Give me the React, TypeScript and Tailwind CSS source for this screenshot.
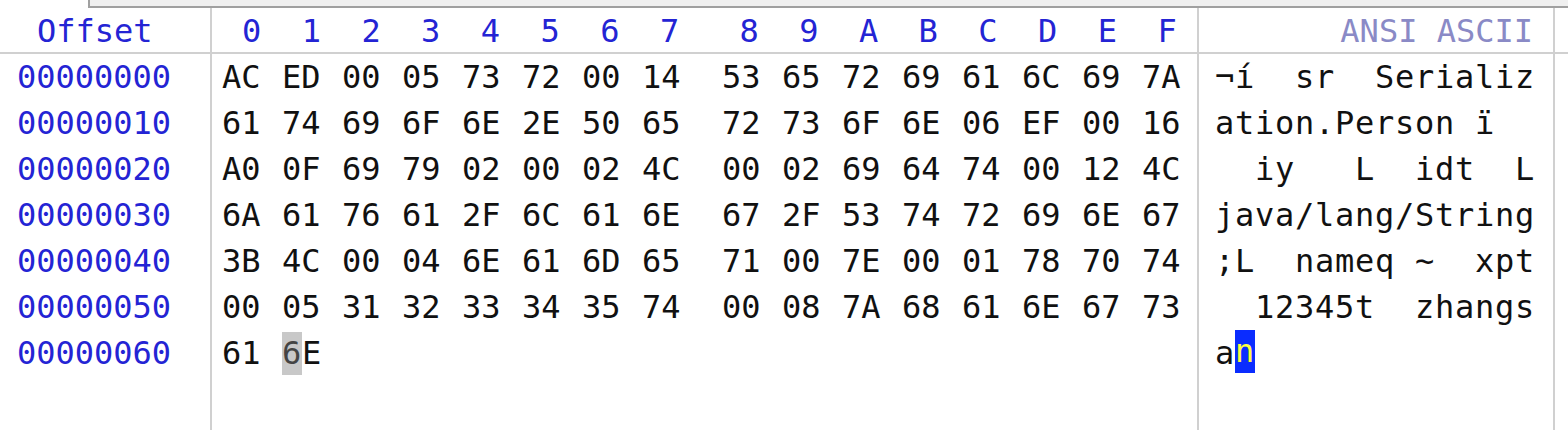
import React from 'react'

const hex = [
  'AC ED 00 05 73 72 00 14 53 65 72 69 61 6C 69 7A',
  '61 74 69 6F 6E 2E 50 65 72 73 6F 6E 06 EF 00 16',
  'A0 0F 69 79 02 00 02 4C 00 02 69 64 74 00 12 4C',
  '6A 61 76 61 2F 6C 61 6E 67 2F 53 74 72 69 6E 67',
  '3B 4C 00 04 6E 61 6D 65 71 00 7E 00 01 78 70 74',
  '00 05 31 32 33 34 35 74 00 08 7A 68 61 6E 67 73',
  '61 6E',
].map((r) => r.split(' '))

const cols = ['0', '1', '2', '3', '4', '5', '6', '7', '8', '9', 'A', 'B', 'C', 'D', 'E', 'F']

// cursor sits on the last byte, second nibble
const cursor = { row: 6, col: 1 }

function toChar(b: string) {
  const n = parseInt(b, 16)
  if (n < 0x20 || n === 0x7f || n === 0xa0 || (n >= 0x80 && n < 0xa0)) return ' '
  return new TextDecoder('windows-1252').decode(new Uint8Array([n]))
}

const mono = { fontFamily: '"DejaVu Sans Mono", "Liberation Mono", monospace' }

export default function App() {
  return (
    <div className="w-[1568px] h-[430px] bg-white overflow-hidden text-[32px] leading-[46px]" style={mono}>
      <div className="flex h-[8px]">
        <div className="w-[88px]" />
        <div className="flex-1 bg-[#f0f0f0] border-l-2 border-b-2 border-[#a0a0a0]" />
      </div>
      <div className="flex h-[422px]">
        {/* offset column */}
        <div className="w-[212px] border-r-2 border-[#d0d0d0] flex flex-col">
          <div className="h-[46px] border-b-2 border-[#d0d0d0] pl-[37px] leading-[46px] text-[#2424d4]">Offset</div>
          {hex.map((_, i) => (
            <div key={i} className="h-[46px] pl-[17px] text-[#2424d4]">
              {(i * 16).toString(16).toUpperCase().padStart(8, '0')}
            </div>
          ))}
        </div>

        {/* hex column */}
        <div className="w-[987px] border-r-2 border-[#d0d0d0] flex flex-col">
          <div className="h-[46px] border-b-2 border-[#d0d0d0] pl-[10px] flex leading-[46px] text-[#2424d4]">
            {cols.map((c, j) => (
              <span key={c} className={j === 7 ? 'w-[80px] pl-[20px]' : 'w-[60px] pl-[20px]'}>{c}</span>
            ))}
          </div>
          {hex.map((row, i) => (
            <div key={i} className="h-[46px] pl-[10px] flex text-[#111111] whitespace-pre">
              {row.map((b, j) => (
                <span key={j} className={j === 7 ? 'w-[80px] shrink-0' : 'w-[60px] shrink-0'}>
                  {i === cursor.row && j === cursor.col ? (
                    <>
                      <span className="inline-block w-[20px] bg-[#c8c8c8] text-[#444444] leading-[43px]">{b[0]}</span>
                      {b[1]}
                    </>
                  ) : (
                    b
                  )}
                </span>
              ))}
            </div>
          ))}
        </div>

        {/* ascii column */}
        <div className="w-[356px] border-r-2 border-[#d0d0d0] flex flex-col">
          <div className="h-[46px] border-b-2 border-[#d0d0d0] pr-[20px] text-right leading-[46px] text-[#8a8ac6]">ANSI ASCII</div>
          {hex.map((row, i) => (
            <div key={i} className="h-[46px] pl-[16px] flex text-[#111111] whitespace-pre">
              {row.map((b, j) => (
                <span
                  key={j}
                  className={
                    i === cursor.row && j === cursor.col
                      ? 'w-[20px] shrink-0 bg-[#0a2cff] text-[#ffff40] leading-[43px] h-[43px]'
                      : 'w-[20px] shrink-0'
                  }
                >
                  {toChar(b)}
                </span>
              ))}
            </div>
          ))}
        </div>

        <div className="flex-1 flex flex-col">
          <div className="h-[46px] border-b-2 border-[#d0d0d0]" />
        </div>
      </div>
    </div>
  )
}
